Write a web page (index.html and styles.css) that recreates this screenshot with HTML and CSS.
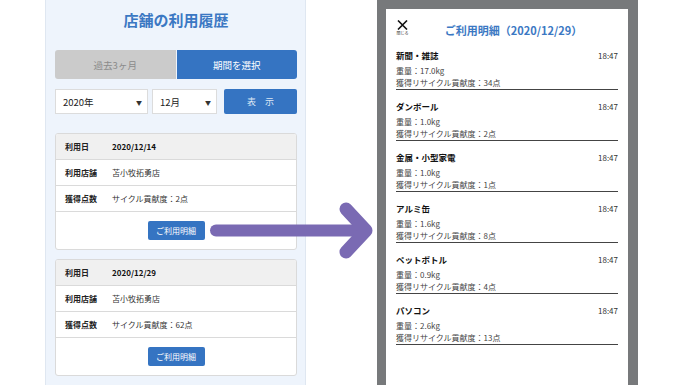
FILE: index.html
```html
<!DOCTYPE html>
<html lang="ja">
<head>
    <meta charset="UTF-8">
    <meta name="viewport" content="width=device-width, initial-scale=1.0">
    <title>店舗の利用履歴</title>
    <link rel="stylesheet" href="styles.css">
</head>
<body>
    <div class="stage">
        <div class="panel">
            <h1 class="panel-title">店舗の利用履歴</h1>
            <div class="tabs">
                <div class="tab">過去3ヶ月</div>
                <div class="tab active">期間を選択</div>
            </div>
            <div class="filter">
                <div class="select year">2020年</div>
                <div class="select month">12月</div>
                <button class="show-btn">表　示</button>
            </div>

            <div class="card">
                <div class="row head"><span class="label">利用日</span><span class="value">2020/12/14</span></div>
                <div class="row"><span class="label">利用店舗</span><span class="value">苫小牧拓勇店</span></div>
                <div class="row"><span class="label">獲得点数</span><span class="value">サイクル貢献度：2点</span></div>
                <div class="card-foot"><button class="detail-btn">ご利用明細</button></div>
            </div>

            <div class="card">
                <div class="row head"><span class="label">利用日</span><span class="value">2020/12/29</span></div>
                <div class="row"><span class="label">利用店舗</span><span class="value">苫小牧拓勇店</span></div>
                <div class="row"><span class="label">獲得点数</span><span class="value">サイクル貢献度：62点</span></div>
                <div class="card-foot"><button class="detail-btn">ご利用明細</button></div>
            </div>
        </div>

        <div class="phone">
            <div class="sheet">
                <div class="sheet-header">
                    <div class="close">
                        <svg width="11" height="10" viewBox="0 0 11 10"><path d="M1 0.5 L10 9.5 M10 0.5 L1 9.5" stroke="#111" stroke-width="1.6" fill="none"/></svg>
                        <span>閉じる</span>
                    </div>
                    <h2 class="sheet-title">ご利用明細（2020/12/29）</h2>
                </div>

                <div class="item">
                    <div class="item-top"><span class="item-name">新聞・雑誌</span><span class="time">18:47</span></div>
                    <div class="item-line">重量：17.0kg</div>
                    <div class="item-line">獲得リサイクル貢献度：34点</div>
                </div>
                <div class="item">
                    <div class="item-top"><span class="item-name">ダンボール</span><span class="time">18:47</span></div>
                    <div class="item-line">重量：1.0kg</div>
                    <div class="item-line">獲得リサイクル貢献度：2点</div>
                </div>
                <div class="item">
                    <div class="item-top"><span class="item-name">金属・小型家電</span><span class="time">18:47</span></div>
                    <div class="item-line">重量：1.0kg</div>
                    <div class="item-line">獲得リサイクル貢献度：1点</div>
                </div>
                <div class="item">
                    <div class="item-top"><span class="item-name">アルミ缶</span><span class="time">18:47</span></div>
                    <div class="item-line">重量：1.6kg</div>
                    <div class="item-line">獲得リサイクル貢献度：8点</div>
                </div>
                <div class="item">
                    <div class="item-top"><span class="item-name">ペットボトル</span><span class="time">18:47</span></div>
                    <div class="item-line">重量：0.9kg</div>
                    <div class="item-line">獲得リサイクル貢献度：4点</div>
                </div>
                <div class="item">
                    <div class="item-top"><span class="item-name">パソコン</span><span class="time">18:47</span></div>
                    <div class="item-line">重量：2.6kg</div>
                    <div class="item-line">獲得リサイクル貢献度：13点</div>
                </div>
            </div>
        </div>

        <svg class="arrow" width="180" height="62" viewBox="0 0 180 62">
            <path d="M11 30.5 H158" stroke="#7a6ab3" stroke-width="12" stroke-linecap="round" fill="none"/>
            <path d="M141 9 L161 30.5 L141 52" stroke="#7a6ab3" stroke-width="13" stroke-linecap="round" stroke-linejoin="round" fill="none"/>
        </svg>
    </div>
</body>
</html>
```

FILE: styles.css
```css
body {
    margin: 0;
    background-color: #fff;
    font-family: "Noto Sans CJK JP", "Noto Sans", sans-serif;
    color: #333;
}
.stage {
    position: relative;
    display: flex;
    height: 385px;
    padding-left: 45px;
    overflow: hidden;
}

/* left: history panel */
.panel {
    width: 261px;
    box-sizing: border-box;
    padding: 10px 8px 0 9px;
    background-color: #eef4fc;
    border-left: 1px solid #dfe7f1;
    border-right: 1px solid #dfe7f1;
}
.panel-title {
    margin: 0 0 20px;
    font-size: 15px;
    line-height: 20px;
    text-align: center;
    color: #3b78c3;
}
.tabs {
    display: flex;
    gap: 1px;
    height: 29px;
}
.tab {
    flex: 1;
    display: flex;
    align-items: center;
    justify-content: center;
    font-size: 9.5px;
    color: #8a8a8a;
    background-color: #cbcbcb;
    border-radius: 3px 0 0 3px;
}
.tab.active {
    color: #fff;
    background-color: #3574c2;
    border-radius: 0 3px 3px 0;
}
.filter {
    display: flex;
    height: 25px;
    margin: 10px 0 19px;
}
.select {
    position: relative;
    box-sizing: border-box;
    display: flex;
    align-items: center;
    padding-left: 7px;
    font-size: 9.5px;
    color: #222;
    background-color: #fff;
    border: 1px solid #dcdcdc;
}
.select::after {
    content: "▼";
    position: absolute;
    right: 5px;
    top: 8px;
    font-size: 6px;
    color: #333;
}
.select.year {
    width: 93px;
}
.select.month {
    width: 65px;
    margin-left: 4px;
}
.show-btn {
    width: 73px;
    margin-left: 7px;
    padding: 0;
    font-family: inherit;
    font-size: 9px;
    color: #dbe6f4;
    background-color: #3574c2;
    border: none;
    border-radius: 2px;
}

.card {
    margin-bottom: 9px;
    background-color: #fff;
    border: 1px solid #dadada;
    border-radius: 3px;
    overflow: hidden;
}
.row {
    display: flex;
    align-items: center;
    height: 25px;
    padding-left: 9px;
    font-size: 8px;
    border-bottom: 1px solid #dadada;
}
.row.head {
    background-color: #f0f0f0;
}
.row.head .value {
    font-weight: bold;
    color: #111;
}
.label {
    width: 47px;
    font-weight: bold;
    color: #222;
}
.card-foot {
    display: flex;
    justify-content: center;
    padding: 9px 0 9px;
}
.detail-btn {
    width: 57px;
    height: 19px;
    padding: 0;
    font-family: inherit;
    font-size: 8px;
    color: #fff;
    background-color: #3574c2;
    border: none;
    border-radius: 2px;
}

/* right: phone with detail sheet */
.phone {
    width: 261px;
    height: 385px;
    box-sizing: border-box;
    margin-left: 71px;
    border: solid #77797b;
    border-width: 9px 10px 0 9px;
}
.sheet {
    height: 100%;
    padding: 0 10px;
    background-color: #fff;
}
.sheet-header {
    display: flex;
    align-items: flex-start;
    height: 19px;
    padding-top: 11px;
}
.close {
    display: flex;
    flex-direction: column;
    align-items: center;
    width: 13px;
}
.close svg {
    display: block;
}
.close span {
    margin-top: 1px;
    font-size: 4px;
    line-height: 5px;
    color: #333;
    white-space: nowrap;
}
.sheet-title {
    flex: 1;
    margin: 3px 0 0;
    font-size: 11px;
    line-height: 14px;
    text-align: center;
    color: #3b78c3;
}
.item {
    height: 42px;
    padding-top: 8px;
    border-bottom: 1px solid #444;
}
.item-top {
    display: flex;
    align-items: baseline;
    justify-content: space-between;
    height: 14px;
    line-height: 14px;
    margin: 1px 0 3px;
    font-size: 8.5px;
}
.item-name {
    font-weight: bold;
    color: #111;
}
.time {
    font-size: 8px;
    color: #333;
}
.item-line {
    font-size: 8px;
    line-height: 12px;
    color: #444;
}

.arrow {
    position: absolute;
    left: 205px;
    top: 200px;
}
```
